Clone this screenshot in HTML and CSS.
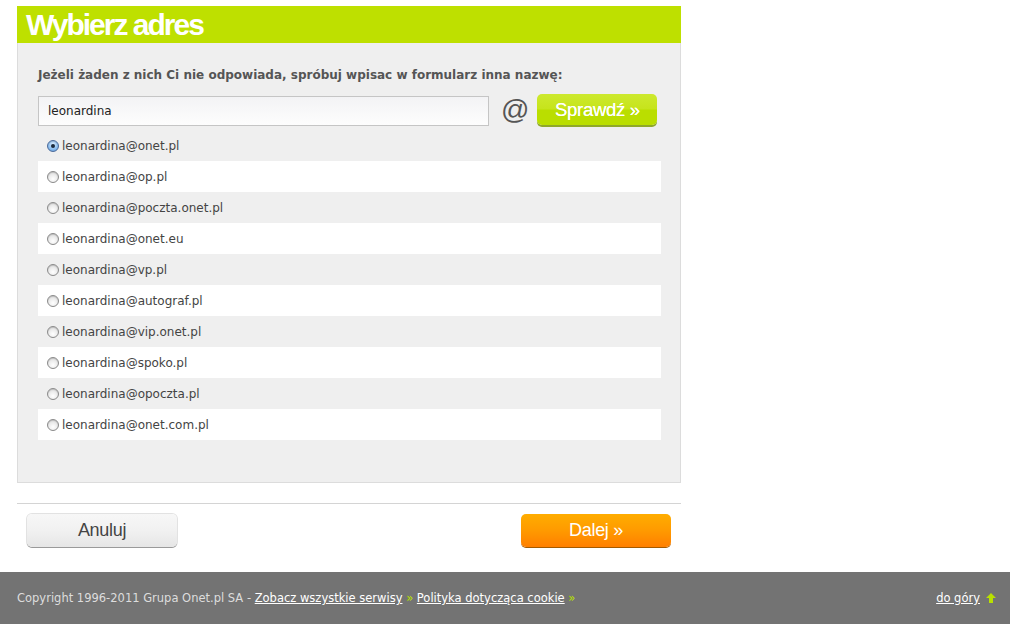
FILE: index.html
```html
<!DOCTYPE html>
<html lang="pl">
<head>
    <meta charset="UTF-8">
    <title>Wybierz adres</title>
    <link rel="stylesheet" href="styles.css">
</head>
<body>
    <main class="wrapper">
        <section class="choose">
            <h1 class="choose-title">Wybierz adres</h1>
            <div class="choose-body">
                <p class="hint">Jeżeli żaden z nich Ci nie odpowiada, spróbuj wpisac w formularz inna nazwę:</p>
                <div class="check-row">
                    <input type="text" class="login-input" value="leonardina">
                    <span class="at">@</span>
                    <button class="btn btn-green">Sprawdź »</button>
                </div>
                <ul class="domains">
                    <li><label><input type="radio" name="addr" checked> leonardina@onet.pl</label></li>
                    <li><label><input type="radio" name="addr"> leonardina@op.pl</label></li>
                    <li><label><input type="radio" name="addr"> leonardina@poczta.onet.pl</label></li>
                    <li><label><input type="radio" name="addr"> leonardina@onet.eu</label></li>
                    <li><label><input type="radio" name="addr"> leonardina@vp.pl</label></li>
                    <li><label><input type="radio" name="addr"> leonardina@autograf.pl</label></li>
                    <li><label><input type="radio" name="addr"> leonardina@vip.onet.pl</label></li>
                    <li><label><input type="radio" name="addr"> leonardina@spoko.pl</label></li>
                    <li><label><input type="radio" name="addr"> leonardina@opoczta.pl</label></li>
                    <li><label><input type="radio" name="addr"> leonardina@onet.com.pl</label></li>
                </ul>
            </div>
        </section>

        <div class="actions">
            <button class="btn btn-gray">Anuluj</button>
            <button class="btn btn-orange">Dalej »</button>
        </div>
    </main>

    <footer class="footer">
        <p class="copy">Copyright 1996-2011 Grupa Onet.pl SA - <a href="#">Zobacz wszystkie serwisy</a> <span class="raquo">»</span> <a href="#">Polityka dotycząca cookie</a> <span class="raquo">»</span></p>
        <p class="top-link"><a href="#">do góry</a>
            <svg width="10" height="10" viewBox="0 0 10 10"><path d="M5 0 L10 5 L7 5 L7 10 L3 10 L3 5 L0 5 Z" fill="#b8e000"/></svg>
        </p>
    </footer>
</body>
</html>
```

FILE: styles.css
```css
* {
    margin: 0;
    padding: 0;
    box-sizing: border-box;
}

body {
    background: #fff;
    font-family: 'DejaVu Sans', Verdana, sans-serif;
    color: #444;
}

.wrapper {
    width: 664px;
    margin-left: 17px;
    padding-top: 6px;
}

/* Header */
.choose-title {
    height: 37px;
    background: #bee000;
    color: #fff;
    font-family: 'Liberation Sans', Arial, sans-serif;
    font-size: 30px;
    font-weight: 700;
    letter-spacing: -2px;
    line-height: 37px;
    padding-left: 9px;
}

.choose-body {
    background: #efefef;
    border: 1px solid #dcdcdc;
    border-top: none;
    padding: 25px 20px 42px 20px;
    height: 440px;
}

.hint {
    font-size: 12px;
    font-weight: 700;
    color: #555;
    line-height: 14px;
}

.check-row {
    display: flex;
    align-items: center;
    margin-top: 11px;
    height: 33px;
}

.login-input {
    width: 451px;
    height: 30px;
    border: 1px solid #c5c5c5;
    background: linear-gradient(#f3f3f5, #fdfdfd);
    font-family: 'DejaVu Sans', Verdana, sans-serif;
    font-size: 12px;
    color: #222;
    padding-left: 9px;
    margin-top: 2px;
    outline: none;
}

.at {
    font-family: 'Liberation Sans', Arial, sans-serif;
    font-size: 28px;
    color: #555;
    margin-left: 12px;
    margin-right: 8px;
    line-height: 30px;
}

.btn {
    font-family: 'Liberation Sans', Arial, sans-serif;
    font-size: 18px;
    border: none;
    border-radius: 5px;
    cursor: pointer;
    height: 33px;
    letter-spacing: -0.3px;
}

.btn-green {
    width: 120px;
    color: #fff;
    font-size: 18.5px;
    text-shadow: 0 0 0.4px #fff;
    background: linear-gradient(#cde92e 0%, #c6e41c 48%, #bade00 52%, #bade00 100%);
    box-shadow: 0 2px 0 #8fa82a;
    height: 31px;
}

.domains {
    list-style: none;
    margin-top: 4px;
    width: 623px;
}

.domains li {
    height: 31px;
    display: flex;
    align-items: center;
    font-size: 12px;
    color: #444;
    padding-left: 9px;
}

.domains li:nth-child(even) {
    background: #fff;
}

.domains label {
    display: flex;
    align-items: center;
}

.domains input {
    appearance: none;
    width: 12px;
    height: 12px;
    margin-right: 3px;
    border-radius: 50%;
    border: 1px solid #8a8a8a;
    background: radial-gradient(circle at 50% 70%, #ffffff 0%, #e4e4e4 70%, #cfcfcf 100%);
    box-shadow: inset 0 1px 1px rgba(0, 0, 0, 0.15);
    display: inline-grid;
    place-content: center;
}

.domains input:checked {
    border-color: #4a6a9a;
    background: radial-gradient(circle at 50% 30%, #d8ecff 0%, #8ebfef 60%, #5a95d8 100%);
}

.domains input:checked::before {
    content: "";
    width: 4px;
    height: 4px;
    border-radius: 50%;
    background: #1b2a3c;
}

/* Bottom actions */
.actions {
    border-top: 1px solid #d4d4d4;
    margin-top: 20px;
    padding: 10px 10px 0 10px;
    display: flex;
    justify-content: space-between;
    height: 69px;
}

.btn-gray {
    width: 150px;
    color: #444;
    background: linear-gradient(#f7f7f7 0%, #f1f1f1 50%, #e6e6e6 100%);
    box-shadow: 0 1px 0 #9a9a9a, 0 0 0 1px #e2e2e2;
}

.btn-orange {
    width: 150px;
    color: #fff;
    background: linear-gradient(#ffad00 0%, #ff9a00 50%, #ff7f00 100%);
    box-shadow: 0 1px 0 #a35a00;
}

/* Footer */
.footer {
    background: #737373;
    height: 52px;
    display: flex;
    justify-content: space-between;
    align-items: center;
    padding: 0 14px 0 17px;
    font-size: 11.5px;
    color: #ddd;
}

.footer a {
    color: #fff;
}

.raquo {
    color: #b8e000;
}

.top-link {
    display: flex;
    align-items: center;
    gap: 6px;
}
```
